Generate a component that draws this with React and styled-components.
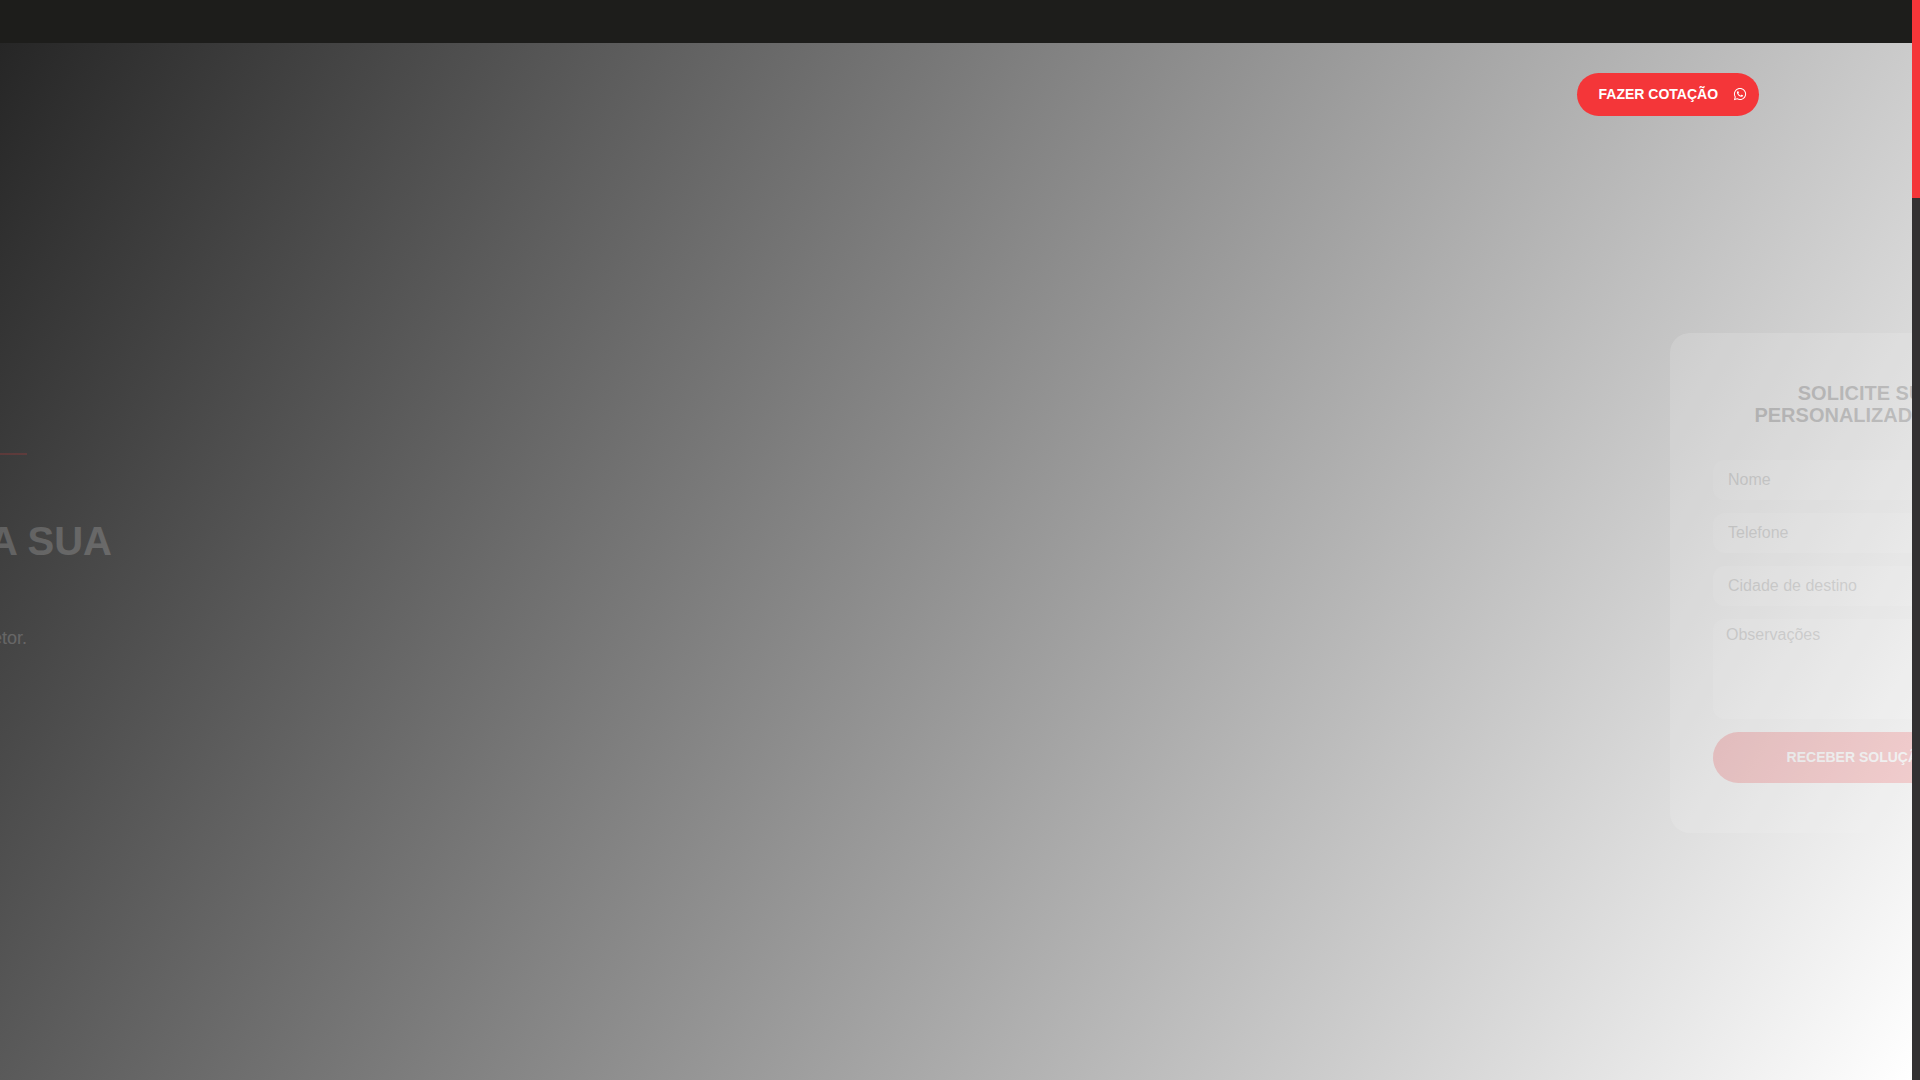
import React from "react";
import styled, { createGlobalStyle } from "styled-components";
import { FaWhatsapp } from "react-icons/fa";

const GlobalStyle = createGlobalStyle`
  *, *::before, *::after { box-sizing: border-box; }
  body {
    margin: 0;
    font-family: "Liberation Sans", Arial, sans-serif;
    background: #333132;
  }
`;

const Shell = styled.div`
  display: flex;
  height: 100vh;
  overflow: hidden;
`;

const Page = styled.div`
  flex: 1;
  min-width: 0;
  display: flex;
  flex-direction: column;
  overflow: hidden;
`;

const ScrollTrack = styled.div`
  width: 8px;
  background: #333132;
`;

const ScrollThumb = styled.div`
  height: 198px;
  background: #f43639;
`;

const TopBar = styled.div`
  height: 43px;
  flex-shrink: 0;
  background: #1d1d1b;
`;

const Hero = styled.section`
  flex: 1;
  display: flex;
  flex-direction: column;
  overflow: hidden;
  background: linear-gradient(120deg, #262626 0%, #ffffff 100%);
`;

const Header = styled.header`
  display: flex;
  justify-content: flex-end;
  padding: 30px 8% 0;
`;

const QuoteButton = styled.button`
  display: flex;
  align-items: center;
  gap: 15px;
  height: 43px;
  padding: 0 12px 2px 22px;
  border: 0;
  border-radius: 22px;
  background: #f43639;
  color: #ffffff;
  font: bold 14px "Liberation Sans", Arial, sans-serif;
  text-transform: uppercase;
  cursor: pointer;
`;

const Content = styled.main`
  flex: 1;
  display: flex;
  align-items: center;
  justify-content: space-between;
  padding-bottom: 30px;
`;

const Copy = styled.div`
  width: 600px;
  min-height: 260px;
  margin-left: -488px;
  display: flex;
  flex-direction: column;
  align-items: flex-end;
  opacity: 0.18;
`;

const Rule = styled.hr`
  width: 480px;
  margin: 0 85px 64px 0;
  border: 0;
  border-top: 2px solid #f43639;
`;

const Headline = styled.h1`
  margin: 0 0 61px;
  font-size: 40px;
  line-height: 44px;
  color: #ffffff;
`;

const Lead = styled.p`
  margin: 0 85px 0 0;
  font-size: 18px;
  line-height: 28px;
  color: #ffffff;
`;

const FormCard = styled.form`
  flex-shrink: 0;
  width: 500px;
  margin-right: -258px;
  display: flex;
  flex-direction: column;
  gap: 13px;
  padding: 49px 43px 50px;
  border-radius: 20px;
  background: #f4f4f4;
  opacity: 0.19;
`;

const FormTitle = styled.h2`
  margin: 0 0 21px;
  font-size: 20px;
  line-height: 22px;
  text-align: center;
  color: #333132;
`;

const Field = styled.input`
  width: 100%;
  height: 40px;
  padding: 0 15px;
  border: 0;
  border-radius: 12px;
  background: #ffffff;
  font: 16px "Liberation Sans", Arial, sans-serif;
  &::placeholder { color: #7a7a7a; opacity: 1; }
`;

const Area = styled.textarea`
  display: block;
  width: 100%;
  height: 100px;
  padding: 7px 13px;
  border: 0;
  border-radius: 12px;
  background: #ffffff;
  resize: none;
  font: 16px "Liberation Sans", Arial, sans-serif;
  &::placeholder { color: #7a7a7a; opacity: 1; }
`;

const Submit = styled.button`
  height: 51px;
  padding: 0 0 2px;
  border: 0;
  border-radius: 26px;
  background: #f43639;
  color: #ffffff;
  font: bold 14px "Liberation Sans", Arial, sans-serif;
  cursor: pointer;
`;

export default function App() {
  return (
    <>
      <GlobalStyle />
      <Shell>
        <Page>
          <TopBar />
          <Hero>
            <Header>
              <QuoteButton type="button">
                Fazer cotação
                <FaWhatsapp size={14} aria-hidden="true" />
              </QuoteButton>
            </Header>
            <Content>
              <Copy>
                <Rule />
                <Headline>A SUA</Headline>
                <Lead>setor.</Lead>
              </Copy>
              <FormCard>
                <FormTitle>
                  SOLICITE SUA COTAÇÃO
                  <br />
                  PERSONALIZADA AGORA MESMO
                </FormTitle>
                <Field type="text" aria-label="Nome" placeholder="Nome" />
                <Field type="tel" aria-label="Telefone" placeholder="Telefone" />
                <Field type="text" aria-label="Cidade de destino" placeholder="Cidade de destino" />
                <Area aria-label="Observações" placeholder="Observações" />
                <Submit type="button">RECEBER SOLUÇÃO PERSONALIZADA</Submit>
              </FormCard>
            </Content>
          </Hero>
        </Page>
        <ScrollTrack>
          <ScrollThumb />
        </ScrollTrack>
      </Shell>
    </>
  );
}
